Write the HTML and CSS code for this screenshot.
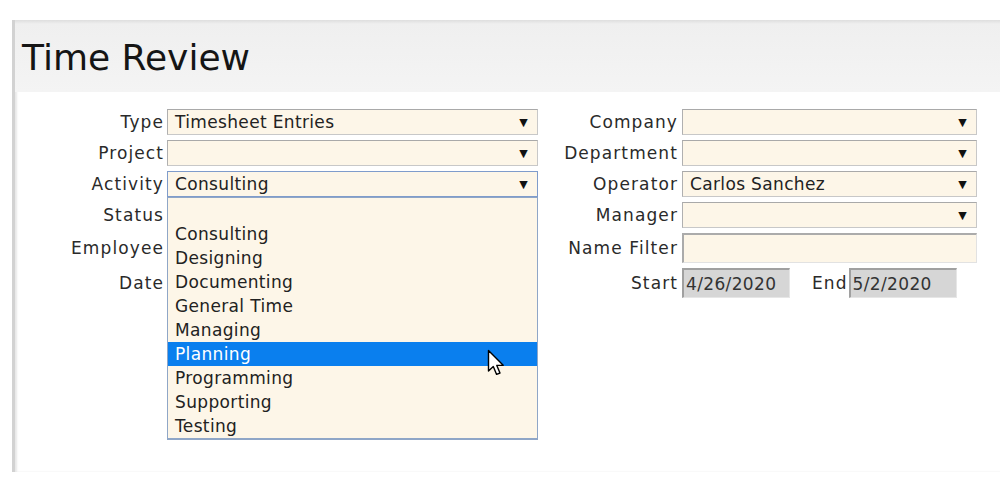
FILE: index.html
```html
<!DOCTYPE html>
<html>
<head>
<meta charset="utf-8">
<link rel="stylesheet" href="styles.css">
</head>
<body>
<div class="page">
  <div class="header"><h1 class="title">Time Review</h1></div>
  <div class="form">
    <div class="col col-left">
      <label class="lbl">Type</label>
      <div class="field"><div class="select"><span class="val">Timesheet Entries</span><span class="arrow">▼</span></div></div>
      <label class="lbl">Project</label>
      <div class="field"><div class="select"><span class="val"></span><span class="arrow">▼</span></div></div>
      <label class="lbl">Activity</label>
      <div class="field">
        <div class="select focused"><span class="val">Consulting</span><span class="arrow">▼</span></div>
        <div class="list">
          <div class="opt"></div>
          <div class="opt">Consulting</div>
          <div class="opt">Designing</div>
          <div class="opt">Documenting</div>
          <div class="opt">General Time</div>
          <div class="opt">Managing</div>
          <div class="opt selected">Planning</div>
          <div class="opt">Programming</div>
          <div class="opt">Supporting</div>
          <div class="opt">Testing</div>
          <svg class="cursor" width="20" height="30" viewBox="0 0 20 30"><path d="M1.5 1.5 L1.5 22 L6.3 17.6 L9.6 25.4 L13 24 L9.8 16.4 L16.2 16.2 Z" fill="#fff" stroke="#000" stroke-width="1.4" stroke-linejoin="round"/></svg>
        </div>
      </div>
      <label class="lbl">Status</label>
      <div class="field"><div class="select"><span class="val"></span><span class="arrow">▼</span></div></div>
      <label class="lbl">Employee</label>
      <div class="field"><div class="input"></div></div>
      <label class="lbl">Date</label>
      <div class="field"><div class="input"></div></div>
    </div>
    <div class="col col-right">
      <label class="lbl">Company</label>
      <div class="field"><div class="select"><span class="val"></span><span class="arrow">▼</span></div></div>
      <label class="lbl">Department</label>
      <div class="field"><div class="select"><span class="val"></span><span class="arrow">▼</span></div></div>
      <label class="lbl">Operator</label>
      <div class="field"><div class="select"><span class="val">Carlos Sanchez</span><span class="arrow">▼</span></div></div>
      <label class="lbl">Manager</label>
      <div class="field"><div class="select"><span class="val"></span><span class="arrow">▼</span></div></div>
      <label class="lbl">Name Filter</label>
      <div class="field"><div class="input name"></div></div>
      <label class="lbl">Start</label>
      <div class="field dates">
        <div class="input date">4/26/2020</div>
        <label class="lbl end">End</label>
        <div class="input date">5/2/2020</div>
      </div>
    </div>
  </div>
</div>
</body>
</html>
```
FILE: styles.css
```css
html, body {
  margin: 0;
  padding: 0;
  background: #fff;
}
body {
  font-family: "DejaVu Sans", Verdana, sans-serif;
  color: #222;
  width: 1000px;
  height: 490px;
  overflow: hidden;
}
.page {
  margin-top: 20px;
  margin-left: 12px;
  height: 452px;
  border-left: 3px solid #d2d2d2;
  box-shadow: inset 2px 0 2px #e8e8e8;
}
.header {
  height: 72px;
  background: linear-gradient(#dedede 0, #efefef 4px, #f4f4f4 100%);
  display: flex;
  align-items: center;
}
.title {
  margin: 0;
  padding-left: 7px;
  padding-top: 2px;
  font-weight: normal;
  font-size: 36px;
  color: #151515;
}
.form {
  display: flex;
  padding-top: 17px;
}
.col {
  display: grid;
  column-gap: 3px;
  row-gap: 5px;
  align-items: center;
}
.col-left {
  grid-template-columns: 149px 371px;
  grid-template-rows: 26px 26px 26px 26px 30px 30px;
}
.col-right {
  margin-left: 20px;
  grid-template-columns: 120px 295px;
  column-gap: 4px;
  grid-template-rows: 26px 26px 26px 26px 30px 30px;
}
.lbl {
  text-align: right;
  font-size: 17px;
  letter-spacing: 1.1px;
  color: #2a2a2a;
  white-space: nowrap;
}
.field {
  position: relative;
  height: 100%;
}
.select {
  box-sizing: border-box;
  height: 26px;
  background: #fdf6e8;
  border: 1px solid #c8c8c8;
  border-top-color: #a9a9a9;
  border-left-color: #b0b0b0;
  display: flex;
  align-items: center;
  justify-content: space-between;
  padding: 0 9px 0 7px;
  font-size: 17px;
  letter-spacing: 0.35px;
  color: #222;
}
.select.focused {
  border: 1px solid #7f9ccb;
}
.arrow {
  font-size: 11px;
  color: #111;
}
.input {
  box-sizing: border-box;
  height: 30px;
  background: #fdf6e8;
  border: 1px solid #e2e2e2;
  border-top: 2px solid #ababab;
  border-left: 2px solid #ababab;
  font-size: 17px;
  letter-spacing: 0.35px;
  display: flex;
  align-items: center;
  padding-left: 2px;
  color: #333;
}
.input.date {
  width: 108px;
  background: #d6d6d6;
  border-color: #e6e6e6;
  border-top-color: #a0a0a0;
  border-left-color: #a0a0a0;
}
.dates {
  display: flex;
  align-items: center;
}
.lbl.end {
  margin-left: 22px;
  margin-right: 1px;
}
.list {
  position: absolute;
  top: 26px;
  left: 0;
  width: 371px;
  box-sizing: border-box;
  border: 1px solid #8fa6c7;
  border-bottom-width: 2px;
  background: #fdf6e8;
  z-index: 2;
}
.opt {
  height: 24px;
  line-height: 24px;
  padding-left: 7px;
  font-size: 17px;
  letter-spacing: 0.35px;
  color: #222;
}
.opt.selected {
  background: #0a7fee;
  color: #fff;
}
.cursor {
  position: absolute;
  left: 319px;
  top: 151px;
}
```
